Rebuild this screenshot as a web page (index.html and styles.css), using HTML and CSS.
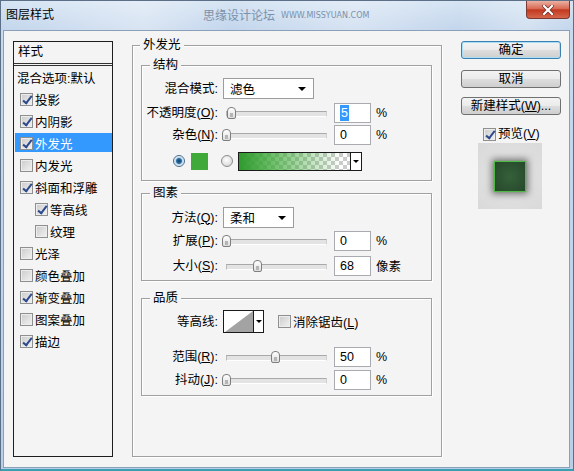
FILE: index.html
```html
<!DOCTYPE html>
<html lang="zh-CN">
<head>
<meta charset="utf-8">
<title>图层样式</title>
<link rel="stylesheet" href="styles.css">
</head>
<body>
<div class="window">
  <div class="titlebar">
    <span class="title">图层样式</span>
    <span class="watermark">思缘设计论坛<small>WWW.MISSYUAN.COM</small></span>
    <span class="close">
      <svg width="12" height="10" viewBox="0 0 12 10"><path d="M2 1 L10 9 M10 1 L2 9" stroke="#6a2a22" stroke-width="3.6" stroke-linecap="square"/><path d="M2 1 L10 9 M10 1 L2 9" stroke="#fff" stroke-width="2.2" stroke-linecap="square"/></svg>
    </span>
  </div>
  <div class="client">
    <div class="styles-list">
      <div class="list-head">样式</div>
      <div class="item plain">混合选项:默认</div>
      <div class="item"><span class="cb on"></span>投影</div>
      <div class="item"><span class="cb on"></span>内阴影</div>
      <div class="item sel"><span class="cb on"></span>外发光</div>
      <div class="item"><span class="cb"></span>内发光</div>
      <div class="item"><span class="cb on"></span>斜面和浮雕</div>
      <div class="item sub"><span class="cb on"></span>等高线</div>
      <div class="item sub"><span class="cb"></span>纹理</div>
      <div class="item"><span class="cb"></span>光泽</div>
      <div class="item"><span class="cb"></span>颜色叠加</div>
      <div class="item"><span class="cb on"></span>渐变叠加</div>
      <div class="item"><span class="cb"></span>图案叠加</div>
      <div class="item"><span class="cb on"></span>描边</div>
    </div>

    <div class="effect-group">
      <span class="legend">外发光</span>

      <div class="sub-group g-struct">
        <span class="legend">结构</span>
        <div class="row r1">
          <span class="lbl">混合模式:</span>
          <span class="select w-blend">滤色<i class="tri"></i></span>
        </div>
        <div class="row r2">
          <span class="lbl">不透明度(<u>O</u>):</span>
          <span class="slider"><span class="thumb" style="left:5%"></span></span>
          <span class="num"><span class="hl">5</span></span>
          <span class="unit">%</span>
        </div>
        <div class="row r3">
          <span class="lbl">杂色(<u>N</u>):</span>
          <span class="slider"><span class="thumb" style="left:0%"></span></span>
          <span class="num">0</span>
          <span class="unit">%</span>
        </div>
        <div class="row r4">
          <span class="radio on"></span>
          <span class="swatch"></span>
          <span class="radio r-second"></span>
          <span class="grad"><span class="grad-fill"></span><span class="grad-arrow"><i class="tri small"></i></span></span>
        </div>
      </div>

      <div class="sub-group g-elem">
        <span class="legend">图素</span>
        <div class="row e1">
          <span class="lbl">方法(<u>Q</u>):</span>
          <span class="select w-method">柔和<i class="tri"></i></span>
        </div>
        <div class="row e2">
          <span class="lbl">扩展(<u>P</u>):</span>
          <span class="slider"><span class="thumb" style="left:0%"></span></span>
          <span class="num">0</span>
          <span class="unit">%</span>
        </div>
        <div class="row e3">
          <span class="lbl">大小(<u>S</u>):</span>
          <span class="slider"><span class="thumb" style="left:31%"></span></span>
          <span class="num">68</span>
          <span class="unit">像素</span>
        </div>
      </div>

      <div class="sub-group g-qual">
        <span class="legend">品质</span>
        <div class="row q1">
          <span class="lbl">等高线:</span>
          <span class="contour">
            <svg class="contour-img" width="29" height="21" viewBox="0 0 29 21"><polygon points="1,21 29,0 29,21" fill="#a3a3a3"/></svg>
            <span class="contour-arrow"><i class="tri small"></i></span>
          </span>
          <span class="cb aa"></span>
          <span class="aa-text">消除锯齿(<u>L</u>)</span>
        </div>
        <div class="row q2">
          <span class="lbl">范围(<u>R</u>):</span>
          <span class="slider"><span class="thumb" style="left:49%"></span></span>
          <span class="num">50</span>
          <span class="unit">%</span>
        </div>
        <div class="row q3">
          <span class="lbl">抖动(<u>J</u>):</span>
          <span class="slider"><span class="thumb" style="left:0%"></span></span>
          <span class="num">0</span>
          <span class="unit">%</span>
        </div>
      </div>
    </div>

    <div class="side">
      <div class="btn default">确定</div>
      <div class="btn b2">取消</div>
      <div class="btn b3">新建样式(<u>W</u>)...</div>
      <div class="preview-row"><span class="cb on"></span><span>预览(<u>V</u>)</span></div>
      <div class="preview"><span class="glow-square"></span></div>
    </div>
  </div>
</div>
</body>
</html>
```
FILE: styles.css
```css
* { box-sizing: border-box; }
html, body { margin: 0; padding: 0; }
body {
  width: 574px;
  height: 471px;
  overflow: hidden;
  font-family: "Liberation Sans", "Noto Sans CJK SC", sans-serif;
  font-size: 12.5px;
  color: #000;
  background: #3a9fb0;
}
u { text-decoration: underline; text-underline-offset: 1px; }

.window {
  width: 574px;
  height: 471px;
  display: flex;
  flex-direction: column;
  background: linear-gradient(#c8dbef, #b8cfe8);
  border: 1px solid #5b6f86;
  border-bottom: 2px solid #3a9fb0;
}

.titlebar {
  height: 29px;
  display: flex;
  align-items: flex-start;
  background:
    linear-gradient(to right, rgba(255,255,255,0) 0%, rgba(255,255,255,.35) 25%, rgba(255,255,255,0) 40%, rgba(255,255,255,.3) 62%, rgba(255,255,255,0) 80%, rgba(255,255,255,.25) 92%, rgba(255,255,255,0)),
    linear-gradient(#d6e4f3, #c3d6ec);
}
.title {
  margin: 6px 0 0 5px;
  font-size: 12px;
  line-height: 16px;
  color: #000;
}
.watermark {
  margin: 7px 0 0 149px;
  font-size: 12px;
  line-height: 16px;
  color: #7b91ab;
  display: flex;
  align-items: center;
}
.watermark small {
  font-family: "DejaVu Sans", sans-serif;
  font-size: 8px;
  margin-left: 6px;
  color: #7b91ab;
}
.close {
  margin-left: auto;
  margin-right: 3px;
  width: 44px;
  height: 18px;
  border: 1px solid #7a3a32;
  border-top: none;
  border-radius: 0 0 4px 4px;
  background: linear-gradient(#eab0a2 0%, #d86a55 45%, #c2391f 52%, #d5664b 100%);
  display: flex;
  align-items: center;
  justify-content: center;
}

.client {
  flex: 1;
  margin: 0 3px 1px 2px;
  border: 1px solid #8aa0b8;
  background: #f4f4f4;
  display: flex;
  align-items: flex-start;
}

/* left styles list */
.styles-list {
  margin: 10px 0 0 9px;
  width: 100px;
  height: 416px;
  border: 1px solid #1e1e1e;
  flex-shrink: 0;
}
.list-head {
  height: 24px;
  line-height: 21px;
  padding-left: 4px;
  border-bottom: 3px double #333;
}
.item {
  height: 22px;
  display: flex;
  align-items: center;
  gap: 2px;
  padding-left: 6px;
  white-space: nowrap;
}
.item.plain { padding-left: 3px; }
.item.sub { padding-left: 21px; }
.item.sel {
  background: linear-gradient(#3399ff, #3399ff) 1px 1px / calc(100% - 1px) 19px no-repeat;
  color: #fff;
}

.cb {
  position: relative;
  width: 13px;
  height: 13px;
  flex-shrink: 0;
  border: 1px solid #8e8f8f;
  background: linear-gradient(135deg, #cbcbcb, #f2f2f2);
  box-shadow: inset 0 0 0 1px #ededed;
}
.cb.on::after {
  content: "";
  position: absolute;
  left: 4px;
  top: 0px;
  width: 3px;
  height: 8px;
  border: solid #2c4a8c;
  border-width: 0 2px 2px 0;
  transform: rotate(38deg);
}

/* main group */
.effect-group {
  position: relative;
  margin: 14px 0 0 19px;
  width: 310px;
  height: 412px;
  flex-shrink: 0;
  border: 1px solid #a0a0a0;
  box-shadow: 1px 1px 0 #fff, inset 1px 1px 0 #fff;
  padding: 19px 9px 0 8px;
}
.legend {
  position: absolute;
  top: -9px;
  left: 7px;
  padding: 0 3px;
  line-height: 16px;
  background: #f4f4f4;
}
.sub-group {
  position: relative;
  width: 291px;
  border: 1px solid #a0a0a0;
  box-shadow: 1px 1px 0 #fff, inset 1px 1px 0 #fff;
}
.sub-group .legend { left: 8px; }
.g-struct { height: 116px; }
.g-elem { height: 88px; margin-top: 12px; }
.g-qual { height: 98px; margin-top: 17px; }

.row {
  display: flex;
  align-items: center;
  height: 21px;
  white-space: nowrap;
}
.r1 { margin-top: 12px; }
.r2 { margin-top: 3px; }
.r3 { margin-top: 1px; }
.r4 { margin-top: 6px; height: 20px; padding-left: 31px; }
.e1 { margin-top: 13px; }
.e2 { margin-top: 2px; }
.e3 { margin-top: 4px; }
.q1 { margin-top: 11px; height: 23px; }
.q2 { margin-top: 13px; }
.q3 { margin-top: 2px; }

.lbl {
  width: 76px;
  flex-shrink: 0;
  text-align: right;
  line-height: 16px;
}

.select {
  margin-left: 5px;
  height: 21px;
  border: 1px solid #9c9c9c;
  background: #fff;
  display: flex;
  align-items: center;
  padding-left: 6px;
}
.w-blend { width: 91px; }
.w-method { width: 71px; }
.tri {
  margin-left: auto;
  margin-right: 7px;
  width: 0;
  height: 0;
  border-left: 4px solid transparent;
  border-right: 4px solid transparent;
  border-top: 4px solid #000;
}
.tri.small {
  margin: 0;
  border-left-width: 3px;
  border-right-width: 3px;
  border-top-width: 3px;
}

.slider {
  position: relative;
  margin-left: 8px;
  width: 101px;
  height: 14px;
  flex-shrink: 0;
}
.slider::before {
  content: "";
  position: absolute;
  left: 0;
  right: 0;
  top: 5px;
  height: 4px;
  background: #e3e3e3;
  border-top: 1px solid #a9a9a9;
  border-bottom: 1px solid #fff;
  border-left: 1px solid #b8b8b8;
  border-right: 1px solid #d0d0d0;
}
.thumb {
  position: absolute;
  top: 1px;
  width: 9px;
  height: 12px;
  margin-left: -4px;
  border: 1px solid #7e7e7e;
  border-radius: 4px 4px 2px 2px;
  background: linear-gradient(#ffffff, #dedede);
}
.thumb::after {
  content: "";
  position: absolute;
  left: 2px;
  bottom: 1px;
  width: 3px;
  height: 4px;
  background: #b5b5b5;
}

.num {
  margin-left: 7px;
  width: 37px;
  height: 20px;
  flex-shrink: 0;
  border: 1px solid #a9abb1;
  background: #fff;
  padding-left: 5px;
  line-height: 18px;
}
.hl {
  background: #3399ff;
  color: #fff;
  padding: 1px 1px;
}
.unit { margin-left: 5px; }

.radio {
  width: 12px;
  height: 12px;
  flex-shrink: 0;
  border-radius: 50%;
  border: 1px solid #8c8c8c;
  background: radial-gradient(circle at 45% 40%, #ffffff 0, #f0f0f0 30%, #cdcdcd 100%);
}
.radio.on {
  border-color: #4a6a8c;
  background: radial-gradient(circle, #0f3e66 0, #2d6fa6 2.5px, #bcd6ec 3.5px, #eef3f8 5px);
}
.swatch {
  margin-left: 6px;
  width: 17px;
  height: 17px;
  background: #3fa93a;
}
.r-second { margin-left: 13px; }
.grad {
  margin-left: 5px;
  width: 124px;
  height: 19px;
  display: flex;
  border: 1px solid #1a1a1a;
}
.grad-fill {
  flex: 1;
  background:
    linear-gradient(to right, #2f9a2e 0%, rgba(60,170,55,.75) 30%, rgba(80,180,70,0) 92%),
    repeating-conic-gradient(#cccccc 0 25%, #ffffff 0 50%) 0 0 / 8px 8px;
}
.grad-arrow {
  width: 11px;
  border-left: 1px solid #1a1a1a;
  background: #fff;
  display: flex;
  align-items: center;
  justify-content: center;
}

.contour {
  margin-left: 5px;
  width: 41px;
  height: 23px;
  display: flex;
  border: 1px solid #1a1a1a;
  background: #fff;
}
.contour-img { display: block; }
.contour-arrow {
  flex: 1;
  border-left: 1px solid #1a1a1a;
  display: flex;
  align-items: center;
  justify-content: center;
}
.cb.aa { margin-left: 14px; }
.aa-text { margin-left: 2px; }

/* side */
.side {
  margin: 10px 0 0 19px;
  width: 100px;
  flex-shrink: 0;
  display: flex;
  flex-direction: column;
}
.btn {
  height: 18px;
  border: 1px solid #707070;
  border-radius: 3px;
  background: linear-gradient(#f3f3f3 0%, #ebebeb 48%, #dddddd 52%, #cfcfcf 100%);
  text-align: center;
  line-height: 16px;
  white-space: nowrap;
}
.btn.default {
  border-color: #3c7fb1;
  box-shadow: inset 0 0 0 1px #a9def7;
}
.b2 { margin-top: 11px; }
.b3 { margin-top: 9px; }
.preview-row {
  margin-top: 11px;
  height: 16px;
  padding-left: 22px;
  display: flex;
  align-items: center;
  gap: 2px;
  line-height: 16px;
}
.preview {
  margin: 1px 0 0 17px;
  width: 64px;
  height: 66px;
  background: radial-gradient(circle, #e6e6e6 0%, #d9d9d9 100%);
  display: flex;
  align-items: center;
  justify-content: center;
}
.glow-square {
  width: 32px;
  height: 31px;
  background: radial-gradient(circle, #35603a 0%, #26482a 100%);
  border: 1px solid #4fb846;
  box-shadow: 0 0 1px 0 rgba(70,190,60,.7), 0 0 7px 2px rgba(0,0,0,.5);
}
```
